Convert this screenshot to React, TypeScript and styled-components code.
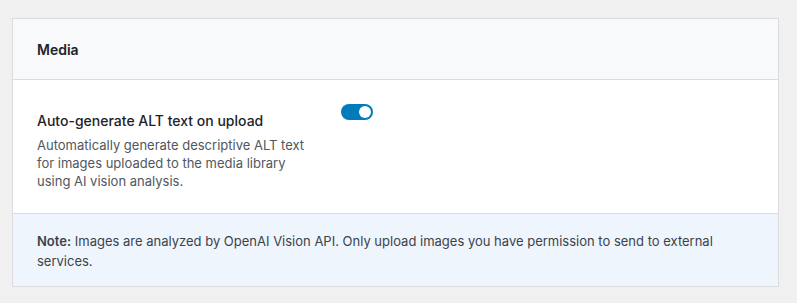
import React from "react";
import styled, { createGlobalStyle } from "styled-components";

const GlobalStyle = createGlobalStyle`
  body {
    margin: 0;
    background-color: #f0f0f1;
    font-family: Inter, "Noto Sans", sans-serif;
  }
`;

const Page = styled.div`
  padding: 18px 18px 16px 12px;
`;

const Card = styled.div`
  background-color: #ffffff;
  border: 1px solid #dcdcde;
`;

const Header = styled.div`
  height: 60px;
  padding: 0 24px;
  display: flex;
  align-items: center;
  background-color: #f8f9fb;
  border-bottom: 1px solid #dcdcde;
`;

const HeaderTitle = styled.h2`
  margin: 0;
  font-size: 14px;
  font-weight: 600;
  color: #1d2327;
`;

const Body = styled.div`
  padding: 24px 24px 23px 24px;
`;

const Row = styled.div`
  display: flex;
  align-items: flex-start;
  gap: 24px;
`;

const Info = styled.div`
  width: 280px;
  padding-top: 7px;
`;

const Label = styled.div`
  font-size: 14px;
  font-weight: 500;
  color: #1d2327;
  line-height: 20px;
`;

const Description = styled.p`
  margin: 5px 0 0;
  font-size: 13px;
  line-height: 18px;
  color: #50575e;
`;

const Toggle = styled.span<{ $on: boolean }>`
  position: relative;
  flex-shrink: 0;
  display: inline-block;
  width: 32px;
  height: 16px;
  border-radius: 8px;
  background-color: ${(p) => (p.$on ? "#007cba" : "#8c8f94")};
  &::after {
    content: "";
    position: absolute;
    top: 2px;
    left: ${(p) => (p.$on ? "18px" : "2px")};
    width: 12px;
    height: 12px;
    border-radius: 50%;
    background-color: #ffffff;
  }
`;

const Note = styled.div`
  padding: 17px 36px 15px 24px;
  background-color: #eef5fd;
  border-top: 1px solid #dcdcde;
  font-size: 13px;
  line-height: 20px;
  color: #3c434a;
  strong {
    font-weight: 600;
    color: #3c434a;
  }
`;

const App: React.FC = () => {
  return (
    <>
      <GlobalStyle />
      <Page>
        <Card>
          <Header>
            <HeaderTitle>Media</HeaderTitle>
          </Header>
          <Body>
            <Row>
              <Info>
                <Label>Auto-generate ALT text on upload</Label>
                <Description>
                  Automatically generate descriptive ALT text for images uploaded to
                  the media library using AI vision analysis.
                </Description>
              </Info>
              <Toggle $on={true} />
            </Row>
          </Body>
          <Note>
            <strong>Note:</strong> Images are analyzed by OpenAI Vision API. Only upload
            images you have permission to send to external services.
          </Note>
        </Card>
      </Page>
    </>
  );
};

export default App;
